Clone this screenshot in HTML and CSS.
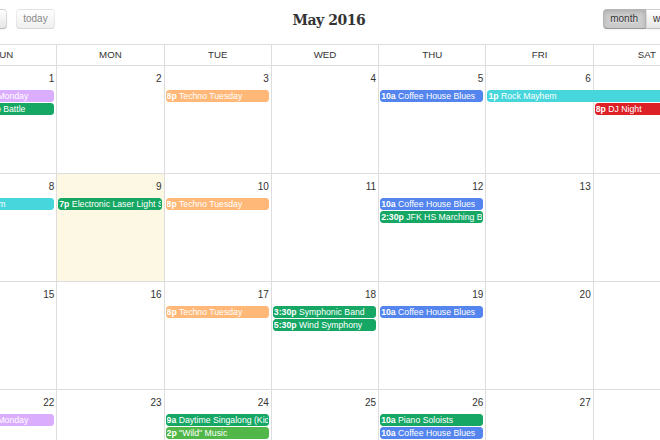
FILE: index.html
```html
<!DOCTYPE html>
<html>
<head>
<meta charset="utf-8">
<title>May 2016</title>
<link rel="stylesheet" href="styles.css">
</head>
<body>
<div class="cal">
  <div class="toolbar">
    <div class="group">
      <div class="btn-group">
        <button class="btn arrow first" aria-label="prev"><svg width="10" height="10" viewBox="0 0 10 10"><path d="M6.5 1.5 3 5l3.5 3.5" fill="none" stroke="#333" stroke-width="1.4"/></svg></button>
        <button class="btn arrow last" aria-label="next"><svg width="10" height="10" viewBox="0 0 10 10"><path d="M3.5 1.5 7 5 3.5 8.5" fill="none" stroke="#333" stroke-width="1.4"/></svg></button>
      </div>
      <button class="btn single disabled">today</button>
    </div>
    <h2 class="title">May 2016</h2>
    <div class="group">
      <div class="btn-group">
        <button class="btn first active">month</button>
        <button class="btn mid">week</button>
        <button class="btn last">day</button>
      </div>
    </div>
  </div>

  <div class="grid">
    <div class="head">
      <div class="hcell">Sun</div>
      <div class="hcell">Mon</div>
      <div class="hcell">Tue</div>
      <div class="hcell">Wed</div>
      <div class="hcell">Thu</div>
      <div class="hcell">Fri</div>
      <div class="hcell">Sat</div>
    </div>

    <div class="week">
      <div class="day"><div class="num">1</div></div>
      <div class="day"><div class="num">2</div></div>
      <div class="day"><div class="num">3</div></div>
      <div class="day"><div class="num">4</div></div>
      <div class="day"><div class="num">5</div></div>
      <div class="day"><div class="num">6</div></div>
      <div class="day"><div class="num">7</div></div>
      <div class="ev purple c1 r2"><b>7p</b> Motown Monday</div>
      <div class="ev green c1 r3"><b>10p</b> Hip Hop Battle</div>
      <div class="ev orange c3 r2"><b>8p</b> Techno Tuesday</div>
      <div class="ev blue c5 r2"><b>10a</b> Coffee House Blues</div>
      <div class="ev cyan c6 r2 span2 cont-right"><b>1p</b> Rock Mayhem</div>
      <div class="ev red c7 r3"><b>8p</b> DJ Night</div>
    </div>

    <div class="week">
      <div class="day"><div class="num">8</div></div>
      <div class="day today"><div class="num">9</div></div>
      <div class="day"><div class="num">10</div></div>
      <div class="day"><div class="num">11</div></div>
      <div class="day"><div class="num">12</div></div>
      <div class="day"><div class="num">13</div></div>
      <div class="day"><div class="num">14</div></div>
      <div class="ev cyan c1 r2 cont-left">Rock Mayhem</div>
      <div class="ev green c2 r2"><b>7p</b> Electronic Laser Light Show</div>
      <div class="ev orange c3 r2"><b>8p</b> Techno Tuesday</div>
      <div class="ev blue c5 r2"><b>10a</b> Coffee House Blues</div>
      <div class="ev green c5 r3"><b>2:30p</b> JFK HS Marching Band</div>
    </div>

    <div class="week">
      <div class="day"><div class="num">15</div></div>
      <div class="day"><div class="num">16</div></div>
      <div class="day"><div class="num">17</div></div>
      <div class="day"><div class="num">18</div></div>
      <div class="day"><div class="num">19</div></div>
      <div class="day"><div class="num">20</div></div>
      <div class="day"><div class="num">21</div></div>
      <div class="ev orange c3 r2"><b>8p</b> Techno Tuesday</div>
      <div class="ev green c4 r2"><b>3:30p</b> Symphonic Band</div>
      <div class="ev green c4 r3"><b>5:30p</b> Wind Symphony</div>
      <div class="ev blue c5 r2"><b>10a</b> Coffee House Blues</div>
    </div>

    <div class="week">
      <div class="day"><div class="num">22</div></div>
      <div class="day"><div class="num">23</div></div>
      <div class="day"><div class="num">24</div></div>
      <div class="day"><div class="num">25</div></div>
      <div class="day"><div class="num">26</div></div>
      <div class="day"><div class="num">27</div></div>
      <div class="day"><div class="num">28</div></div>
      <div class="ev purple c1 r2"><b>7p</b> Motown Monday</div>
      <div class="ev green c3 r2"><b>9a</b> Daytime Singalong (Kids)</div>
      <div class="ev lime c3 r3"><b>2p</b> "Wild" Music</div>
      <div class="ev green c5 r2"><b>10a</b> Piano Soloists</div>
      <div class="ev blue c5 r3"><b>10a</b> Coffee House Blues</div>
    </div>
  </div>
</div>
</body>
</html>
```

FILE: styles.css
```css
html, body {
  margin: 0;
  padding: 0;
  overflow: hidden;
  background: #fff;
}

body {
  font-family: "Liberation Sans", Arial, sans-serif;
  color: #333;
}

.cal {
  width: 766px;
  margin-left: -51px;
}

/* ---------- toolbar ---------- */
.toolbar {
  display: flex;
  justify-content: space-between;
  align-items: flex-start;
  height: 44px;
  padding-top: 9px;
  box-sizing: border-box;
}

.group {
  display: flex;
  align-items: flex-start;
  gap: 8.7px;
}

.btn-group {
  display: flex;
}

.btn {
  box-sizing: border-box;
  height: 20px;
  margin: 0;
  padding: 0 6.5px;
  font-family: "Liberation Sans", Arial, sans-serif;
  font-size: 10px;
  line-height: 18px;
  color: #333;
  background-color: #f5f5f5;
  background-image: linear-gradient(to bottom, #ffffff, #e6e6e6);
  border: 1px solid rgba(0, 0, 0, 0.1);
  border-bottom-color: rgba(0, 0, 0, 0.25);
  border-radius: 0;
  text-shadow: 0 1px 1px rgba(255, 255, 255, 0.75);
  box-shadow: inset 0 1px 0 rgba(255, 255, 255, 0.2), 0 1px 2px rgba(0, 0, 0, 0.05);
}

.btn.arrow {
  width: 29px;
  display: flex;
  align-items: center;
  justify-content: center;
}

.btn.first { border-radius: 4px 0 0 4px; }
.btn.last { border-radius: 0 4px 4px 0; }
.btn.single { border-radius: 4px; }

.btn.disabled {
  opacity: 0.6;
  box-shadow: none;
}

.btn.active {
  background-color: #cccccc;
  background-image: none;
  box-shadow: inset 0 2px 4px rgba(0, 0, 0, 0.15), 0 1px 2px rgba(0, 0, 0, 0.05);
}

.title {
  margin: 0;
  margin-top: 1px;
  font-family: "DejaVu Serif", serif;
  font-weight: 700;
  font-size: 14px;
  line-height: 20px;
  letter-spacing: -0.45px;
  color: #333;
}

/* ---------- grid ---------- */
.grid {
  width: 751px;
}

.head {
  display: grid;
  grid-template-columns: repeat(7, minmax(0, 1fr));
  border-top: 1px solid #ddd;
  border-bottom: 1px solid #ddd;
}

.hcell {
  height: 20px;
  line-height: 20px;
  border-left: 1px solid #ddd;
  text-align: center;
  text-transform: uppercase;
  font-size: 9.7px;
  color: #333;
}

.week {
  display: grid;
  grid-template-columns: repeat(7, minmax(0, 1fr));
  grid-template-rows: 24px 13px 13px 13px 1fr;
  height: 107px;
  border-bottom: 1px solid #ddd;
}

.day {
  grid-row: 1 / -1;
  border-left: 1px solid #ddd;
}

.day:nth-child(1) { grid-column: 1; }
.day:nth-child(2) { grid-column: 2; }
.day:nth-child(3) { grid-column: 3; }
.day:nth-child(4) { grid-column: 4; }
.day:nth-child(5) { grid-column: 5; }
.day:nth-child(6) { grid-column: 6; }
.day:nth-child(7) { grid-column: 7; }

.day.today {
  background: #fcf8e3;
}

.num {
  text-align: right;
  padding: 7px 2px 0 0;
  font-size: 10px;
  line-height: 12px;
  color: #333;
}

/* ---------- events ---------- */
.ev {
  align-self: start;
  margin: 0 2px 1px 2px;
  border: 1px solid;
  border-radius: 3px;
  font-size: 8.7px;
  line-height: 10px;
  color: #fff;
  white-space: nowrap;
  overflow: hidden;
}

.ev b { font-weight: 700; }

.c1 { grid-column: 1; }
.c2 { grid-column: 2; }
.c3 { grid-column: 3; }
.c4 { grid-column: 4; }
.c5 { grid-column: 5; }
.c6 { grid-column: 6; }
.c7 { grid-column: 7; }
.span2 { grid-column-end: span 2; }
.r2 { grid-row: 2; }
.r3 { grid-row: 3; }

.cont-right {
  margin-right: 0;
  border-top-right-radius: 0;
  border-bottom-right-radius: 0;
}

.cont-left {
  margin-left: 0;
  border-top-left-radius: 0;
  border-bottom-left-radius: 0;
}

.purple { background: #dbadff; border-color: #dbadff; }
.green  { background: #16a765; border-color: #16a765; }
.lime   { background: #51b749; border-color: #51b749; }
.orange { background: #ffb878; border-color: #ffb878; }
.blue   { background: #5484ed; border-color: #5484ed; }
.cyan   { background: #46d6db; border-color: #46d6db; }
.red    { background: #dc2127; border-color: #dc2127; }
```
